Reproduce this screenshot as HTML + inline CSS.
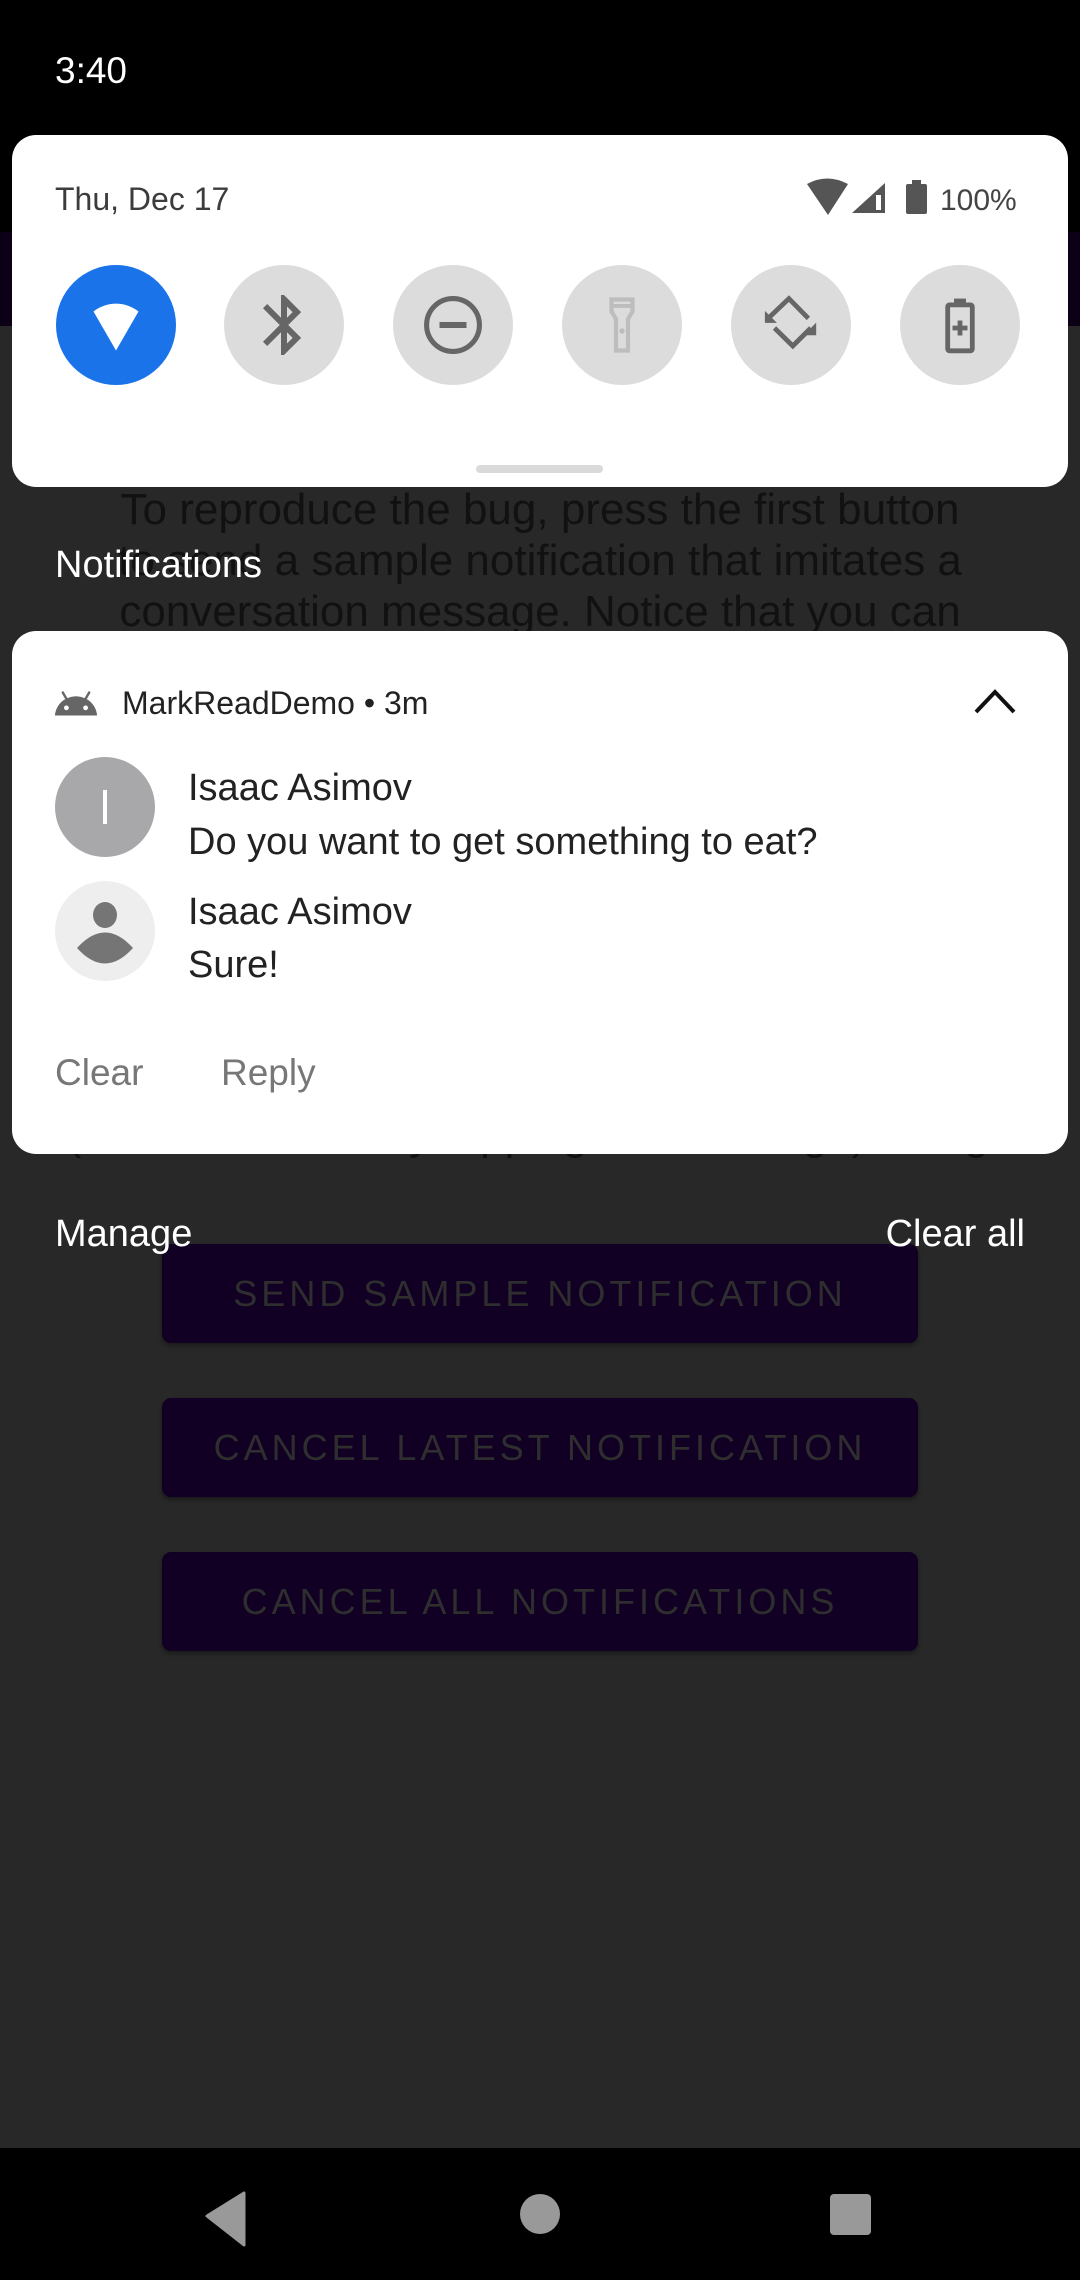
<!DOCTYPE html>
<html><head><meta charset="utf-8"><style>
*{margin:0;padding:0;box-sizing:border-box}
body{width:1080px;height:2280px;background:#282828;position:relative;overflow:hidden;font-family:"Liberation Sans",sans-serif}
.a{position:absolute;white-space:nowrap;line-height:1}
.btn{position:absolute;left:162px;width:756px;height:99px;background:#110024;border-radius:9px;color:#2e2e2e;font-size:36px;letter-spacing:4px;text-align:center;line-height:99px;box-shadow:0 3px 4px rgba(0,0,0,.35)}
.tile{position:absolute;top:265px;width:120px;height:120px;border-radius:50%;background:#dcdcdc}
.tile svg{position:absolute;left:24px;top:24px}
.bg{position:absolute;left:0;width:1080px;text-align:center;color:#111;font-size:44px;line-height:1;white-space:nowrap}
</style></head><body>
<div style="position:absolute;left:0;top:0;width:1080px;height:232px;background:#000"></div>
<div style="position:absolute;left:0;top:232px;width:1080px;height:94px;background:#0c0016"></div>
<div class="a" style="left:55px;top:52px;font-size:37px;color:#fff">3:40</div>

<div class="bg" style="top:488px">To reproduce the bug, press the first button</div>
<div class="bg" style="top:539px">to send a sample notification that imitates a</div>
<div class="bg" style="top:590px">conversation message. Notice that you can</div>
<div class="bg" style="top:1113px">(mark it as read by tapping the message) and go</div>

<!-- QS panel -->
<div style="position:absolute;left:12px;top:135px;width:1056px;height:352px;background:#fff;border-radius:24px"></div>
<div class="a" style="left:55px;top:183px;font-size:32px;color:#3c3c3c">Thu, Dec 17</div>
<svg class="a" style="left:800px;top:175px" width="135" height="46" viewBox="0 0 135 46">
<path d="M7 9 Q27 -2 48 9 L28 40z" fill="#555"/>
<path d="M52 38 L85 8 V38z" fill="#555"/>
<path d="M76 20 V35 H81 V20z" fill="#fff"/>
<rect x="106" y="9" width="21" height="30" rx="2" fill="#555"/><rect x="112" y="5" width="9" height="5" fill="#555"/>
</svg>
<div class="a" style="left:940px;top:186px;font-size:30px;color:#444">100%</div>

<div class="tile" style="left:56px;background:#1a73e8"><svg width="72" height="72" viewBox="0 0 24 24"><path d="M12 20.5L19.5 7.5C15 4 9 4 4.5 7.5z" fill="#fff"/></svg></div>
<div class="tile" style="left:224px"><svg width="72" height="72" viewBox="0 0 24 24"><path d="M17.71 7.71L12 2h-1v7.59L6.41 5 5 6.41 10.59 12 5 17.59 6.41 19 11 14.41V22h1l5.71-5.71-4.3-4.29 4.3-4.29zM13 5.83l1.88 1.88L13 9.59V5.83zm1.88 10.46L13 18.17v-3.76l1.88 1.88z" fill="#666"/></svg></div>
<div class="tile" style="left:393px"><svg width="72" height="72" viewBox="0 0 24 24"><circle cx="12" cy="12" r="8.8" fill="none" stroke="#666" stroke-width="1.7"/><rect x="7.5" y="11" width="9" height="2" fill="#666"/></svg></div>
<div class="tile" style="left:562px"><svg width="72" height="72" viewBox="0 0 24 24"><path d="M8.5 3.5h7v4l-1.5 2.5v10.5h-4V10L8.5 7.5z" fill="none" stroke="#bdbdbd" stroke-width="1.4"/><rect x="8.5" y="5" width="7" height="1.3" fill="#bdbdbd"/><circle cx="12" cy="14" r=".9" fill="#bdbdbd"/></svg></div>
<div class="tile" style="left:731px"><svg width="72" height="72" viewBox="0 0 24 24"><path d="M5 9.2L11.3 3.2 17.8 9.8" fill="none" stroke="#666" stroke-width="1.6"/><path d="M3.3 7.3V11.3H7.3z" fill="#666"/><path d="M6.5 13L12.6 19 18.6 13" fill="none" stroke="#666" stroke-width="1.6"/><path d="M20.4 11.2V15.4H16.2z" fill="#666"/></svg></div>
<div class="tile" style="left:900px"><svg width="72" height="72" viewBox="0 0 24 24"><rect x="7.9" y="5.3" width="8.2" height="15.3" rx=".6" fill="none" stroke="#666" stroke-width="1.6"/><rect x="10" y="3.2" width="4" height="2.4" fill="#666"/><path d="M11.2 10.5h1.6v1.7h1.7v1.6h-1.7v1.7h-1.6v-1.7H9.5v-1.6h1.7z" fill="#666"/></svg></div>
<div style="position:absolute;left:476px;top:465px;width:127px;height:8px;border-radius:4px;background:#dadada"></div>

<div class="a" style="left:55px;top:546px;font-size:38px;color:#fff">Notifications</div>

<!-- notification card -->
<div style="position:absolute;left:12px;top:631px;width:1056px;height:523px;background:#fff;border-radius:24px"></div>
<svg class="a" style="left:53px;top:681px" width="46" height="46" viewBox="0 0 24 24"><path d="M17.6 9.48l1.84-3.18c.16-.31.04-.69-.26-.85a.637.637 0 0 0-.83.22l-1.88 3.24a11.463 11.463 0 0 0-8.94 0L5.65 5.67a.643.643 0 0 0-.87-.2c-.28.18-.37.54-.22.83L6.4 9.48A10.78 10.78 0 0 0 1 18h22a10.78 10.78 0 0 0-5.4-8.52zM7 15.25a1.25 1.25 0 1 1 0-2.5 1.25 1.25 0 0 1 0 2.5zm10 0a1.25 1.25 0 1 1 0-2.5 1.25 1.25 0 0 1 0 2.5z" fill="#666"/></svg>
<div class="a" style="left:122px;top:687px;font-size:32px;color:#222">MarkReadDemo • 3m</div>
<svg class="a" style="left:972px;top:686px" width="46" height="30" viewBox="0 0 46 30"><path d="M4 26L23 6 42 26" fill="none" stroke="#111" stroke-width="4"/></svg>

<div style="position:absolute;left:55px;top:757px;width:100px;height:100px;border-radius:50%;background:#a8a8aa"></div>
<div style="position:absolute;left:103px;top:790px;width:4px;height:34px;background:#fff"></div>
<div class="a" style="left:188px;top:769px;font-size:38px;color:#222">Isaac Asimov</div>
<div class="a" style="left:188px;top:823px;font-size:38px;color:#222">Do you want to get something to eat?</div>

<div style="position:absolute;left:55px;top:881px;width:100px;height:100px;border-radius:50%;background:#eeeeee"></div>
<svg class="a" style="left:55px;top:881px" width="100" height="100" viewBox="0 0 100 100"><ellipse cx="50" cy="34" rx="12" ry="13" fill="#757575"/><path d="M22 67 Q50 36 78 67 Q50 98 22 67z" fill="#757575"/></svg>
<div class="a" style="left:188px;top:893px;font-size:38px;color:#222">Isaac Asimov</div>
<div class="a" style="left:188px;top:946px;font-size:38px;color:#222">Sure!</div>

<div class="a" style="left:55px;top:1054px;font-size:37px;color:#777">Clear</div>
<div class="a" style="left:221px;top:1054px;font-size:37px;color:#777">Reply</div>

<div class="btn" style="top:1244px">SEND SAMPLE NOTIFICATION</div>
<div class="btn" style="top:1398px">CANCEL LATEST NOTIFICATION</div>
<div class="btn" style="top:1552px">CANCEL ALL NOTIFICATIONS</div>

<div class="a" style="left:55px;top:1215px;font-size:38px;color:#fff">Manage</div>
<div class="a" style="right:55px;top:1215px;font-size:38px;color:#fff">Clear all</div>

<!-- nav bar -->
<div style="position:absolute;left:0;top:2148px;width:1080px;height:132px;background:#000"></div>
<svg class="a" style="left:0;top:2148px" width="1080" height="132" viewBox="0 0 1080 132">
<path d="M244 45 V97 L207 68z" fill="#999" stroke="#999" stroke-width="3" stroke-linejoin="round"/>
<circle cx="540" cy="66" r="20" fill="#999"/>
<rect x="830" y="46" width="41" height="41" rx="4" fill="#999"/>
</svg>
</body></html>
